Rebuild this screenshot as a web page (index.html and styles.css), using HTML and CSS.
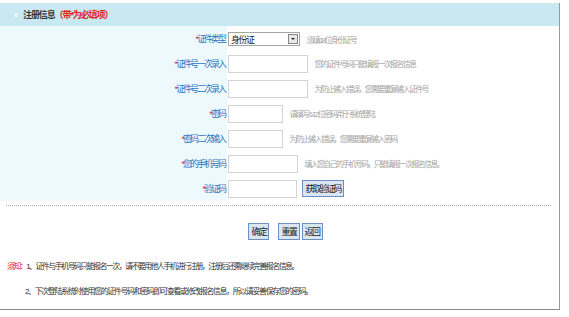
FILE: index.html
```html
<!DOCTYPE html>
<html lang="zh-CN">

<head>
  <meta charset="UTF-8">
  <title>注册信息</title>
  <link rel="stylesheet" href="styles.css">
</head>

<body>
  <div class="box">
    <div class="title">
      <span class="dot"></span>注册信息<span class="must">（带*为必填项）</span>
    </div>

    <table class="form">
      <tr>
        <td class="label"><span class="star">*</span>证件类型</td>
        <td class="field">
          <span class="sel">身份证<span class="arrow"></span></span>
          <span class="hint">须填18位身份证号</span>
        </td>
      </tr>
      <tr>
        <td class="label"><span class="star">*</span>证件号一次录入</td>
        <td class="field">
          <input type="text" class="txt w80">
          <span class="hint">您的证件号码只能填报一次报名信息</span>
        </td>
      </tr>
      <tr>
        <td class="label"><span class="star">*</span>证件号二次录入</td>
        <td class="field">
          <input type="text" class="txt w80">
          <span class="hint">为防止输入错误，您需要重复输入证件号</span>
        </td>
      </tr>
      <tr>
        <td class="label"><span class="star">*</span>密码</td>
        <td class="field">
          <input type="password" class="txt w55">
          <span class="hint">请填写6-12位密码用于系统登陆</span>
        </td>
      </tr>
      <tr>
        <td class="label"><span class="star">*</span>密码二次输入</td>
        <td class="field">
          <input type="password" class="txt w55">
          <span class="hint">为防止输入错误，您需要重复输入密码</span>
        </td>
      </tr>
      <tr>
        <td class="label"><span class="star">*</span>您的手机号码</td>
        <td class="field">
          <input type="text" class="txt w70">
          <span class="hint">填入您自己的手机号码，只能填报一次报名信息。</span>
        </td>
      </tr>
      <tr>
        <td class="label"><span class="star">*</span>验证码</td>
        <td class="field">
          <input type="text" class="txt w69">
          <button class="btn code">获取验证码</button>
        </td>
      </tr>
    </table>

    <div class="line"></div>

    <div class="actions">
      <button class="btn">确定</button>
      <button class="btn">重置</button><button class="btn">返回</button>
    </div>

    <div class="notice">
      <p><span class="red">须知：</span>1、证件与手机号码只能报名一次，请不要用他人手机进行注册，注册后还需继续完善报名信息。</p>
      <p class="second">2、下次登陆系统时使用您的证件号码和密码即可查看或修改报名信息，所以请妥善保存您的密码。</p>
    </div>
  </div>
</body>

</html>
```

FILE: styles.css
```css
/* page */

body {
  margin: 0;
  font-family: "Liberation Sans", "Noto Sans CJK SC", sans-serif;
  background: #fff;
}

.box {
  width: 559px;
  height: 306px;
  margin-top: 3px;
  border-right: 1px solid #999;
  border-bottom: 1px solid #888;
}

.title {
  display: flex;
  align-items: center;
  height: 23px;
  padding-left: 14px;
  background-color: #c9e9f2;
  color: #333;
  font-size: 9px;
  font-weight: bold;
  letter-spacing: -1.1px;
}

.title .dot {
  width: 4px;
  height: 4px;
  margin-right: 5px;
  background-color: #e6f4f8;
}

.title .must {
  color: #e0201c;
}

/* form table */

.form {
  width: 100%;
  border-collapse: collapse;
}

.form td {
  height: 25px;
  padding: 0;
}

.form .label {
  width: 225px;
  padding-right: 2px;
  background-color: #eef9fd;
  color: #2f73c0;
  text-align: right;
  font-size: 9px;
  letter-spacing: -2px;
}

.star {
  color: #e0201c;
}

.form .field {
  padding-left: 1px;
  white-space: nowrap;
}

.txt {
  box-sizing: border-box;
  height: 18px;
  margin: 0;
  border: 1px solid #d4d4d4;
  vertical-align: middle;
}

.w80 { width: 80px; }
.w55 { width: 55px; }
.w70 { width: 70px; }
.w69 { width: 69px; }

.sel {
  box-sizing: border-box;
  display: inline-flex;
  align-items: center;
  justify-content: space-between;
  width: 72px;
  height: 14px;
  padding-left: 2px;
  border: 1px solid #a5a5a5;
  color: #222;
  font-size: 9px;
  letter-spacing: -1.5px;
  vertical-align: middle;
}

.sel .arrow {
  position: relative;
  width: 10px;
  height: 10px;
  margin-right: 1px;
  border: 1px solid #888;
  background-color: #e8e8e8;
  box-sizing: border-box;
}

.sel .arrow::after {
  content: "";
  position: absolute;
  left: 2px;
  top: 3px;
  border-left: 2px solid transparent;
  border-right: 2px solid transparent;
  border-top: 2px solid #222;
}

.hint {
  margin-left: 2px;
  color: #a3a3a3;
  font-size: 8px;
  letter-spacing: -1.7px;
  vertical-align: middle;
}

.btn {
  height: 17px;
  margin: 0;
  padding: 0 2px;
  border: 1px solid #6f8fc0;
  background-color: #dbe6f5;
  color: #222;
  font-family: inherit;
  font-size: 9px;
  letter-spacing: -1.5px;
  white-space: nowrap;
  vertical-align: middle;
}

.btn.code {
  margin-left: 1px;
  padding: 0 3px 0 2px;
  letter-spacing: -2px;
}

.line {
  margin: 4px 8px 0 6px;
  border-top: 1px dotted #aaa;
}

.actions {
  display: flex;
  justify-content: center;
  gap: 2px;
  margin-top: 17px;
  padding-left: 12px;
}

.actions .btn:first-child {
  margin-right: 7px;
}

.notice {
  margin-top: 20px;
  color: #333;
  font-size: 8px;
  letter-spacing: -1.6px;
}

.notice p {
  margin: 0 0 14px 7px;
}

.notice .second {
  margin-left: 25px;
  letter-spacing: -1.4px;
}

.red {
  color: #e0201c;
}
```
